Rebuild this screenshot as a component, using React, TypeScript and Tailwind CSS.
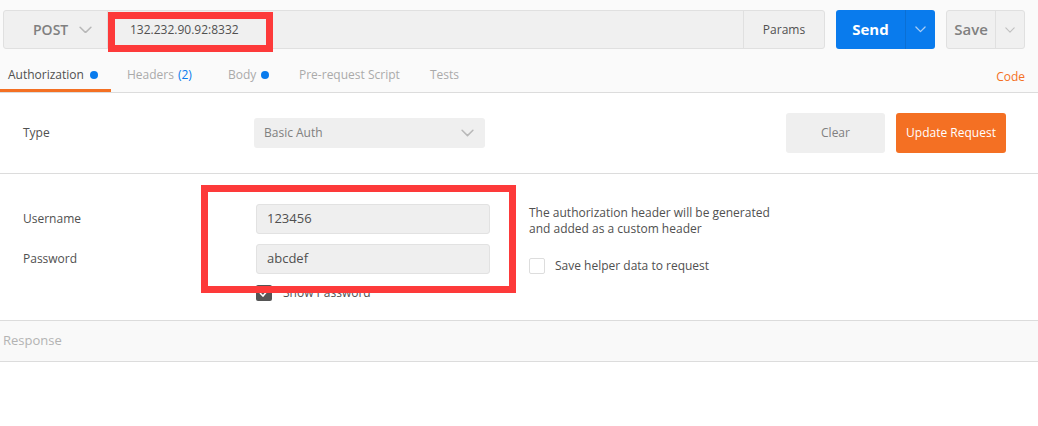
import React from "react";

const Chevron = ({ className, stroke = "#b0b0b0", w = 12 }: { className?: string; stroke?: string; w?: number }) => (
  <svg width={w} height={w * 0.6} viewBox="0 0 12 7" className={className} fill="none">
    <path d="M1 1l5 5 5-5" stroke={stroke} strokeWidth="1.4" strokeLinecap="round" strokeLinejoin="round" />
  </svg>
);

export default function App() {
  return (
    <div className="relative w-[1038px] h-[426px] bg-white overflow-hidden text-[12px] text-[#505050]" style={{ fontFamily: '"Open Sans", "Liberation Sans", sans-serif' }}>
      {/* Top area */}
      <div className="bg-[#fafafa] border-b border-[#dcdcdc]">
        <div className="flex items-start pt-[10px] pl-[3px]">
          <div className="flex h-[39px] w-[822px] bg-[#f0f0f0] border border-[#e0e0e0] rounded-[3px]">
            <div className="w-[104px] flex items-center pl-[29px] gap-[11px] border-r border-[#e0e0e0]">
              <span className="text-[14px] font-semibold text-[#808080]">POST</span>
              <Chevron stroke="#b8b8b8" w={13} />
            </div>
            <div className="flex-1 flex items-center pl-[22px] text-[12px] text-[#505050]">132.232.90.92:8332</div>
            <div className="w-[81px] flex items-center justify-center border-l border-[#e0e0e0] text-[12px] text-[#505050]">Params</div>
          </div>
          <div className="ml-[11px] flex h-[39px] w-[99px] rounded-[3px] bg-[#097bed]">
            <div className="w-[69px] flex items-center justify-center text-[15px] font-bold text-white">Send</div>
            <div className="flex-1 flex items-center justify-center border-l border-[#0a6fd4]">
              <Chevron stroke="#a9cdf5" w={11} />
            </div>
          </div>
          <div className="ml-[11px] flex h-[39px] w-[79px] rounded-[3px] bg-[#f0f0f0] border border-[#e0e0e0]">
            <div className="w-[48px] flex items-center justify-center text-[15px] font-semibold text-[#808080]">Save</div>
            <div className="flex-1 flex items-center justify-center border-l border-[#e0e0e0]">
              <Chevron stroke="#c0c0c0" w={10} />
            </div>
          </div>
        </div>
        <div className="flex items-stretch mt-[9px] h-[34px]">
          <div className="w-[111px] pl-[8px] flex items-center gap-[6px] border-b-[3px] border-[#f47023] pt-[3px]">
            <span className="text-[#505050]">Authorization</span>
            <span className="w-[8px] h-[8px] rounded-full bg-[#097bed]" />
          </div>
          <div className="w-[101px] pl-[16px] flex items-center text-[#aaaaaa]">
            Headers <span className="ml-[4px] text-[#097bed]">(2)</span>
          </div>
          <div className="w-[71px] pl-[16px] flex items-center gap-[5px] text-[#aaaaaa]">
            <span>Body</span>
            <span className="w-[8px] h-[8px] rounded-full bg-[#097bed]" />
          </div>
          <div className="w-[131px] pl-[16px] flex items-center text-[#aaaaaa]">Pre-request Script</div>
          <div className="pl-[16px] flex items-center text-[#aaaaaa]">Tests</div>
          <div className="ml-auto pr-[13px] flex items-center pt-[3px] text-[#f47023]">Code</div>
        </div>
      </div>

      {/* Type row */}
      <div className="flex items-center h-[81px] border-b border-[#dcdcdc]">
        <div className="w-[254px] pl-[23px]">Type</div>
        <div className="w-[231px] h-[30px] rounded-[3px] bg-[#efefef] flex items-center justify-between pl-[10px] pr-[11px] text-[#808080]">
          <span>Basic Auth</span>
          <Chevron stroke="#b8b8b8" w={13} />
        </div>
        <div className="flex-1" />
        <div className="w-[99px] h-[40px] rounded-[3px] bg-[#efefef] flex items-center justify-center text-[#808080]">Clear</div>
        <div className="ml-[11px] w-[110px] h-[40px] rounded-[3px] bg-[#f47023] flex items-center justify-center text-white">Update Request</div>
        <div className="w-[32px]" />
      </div>

      {/* Auth fields */}
      <div className="flex h-[147px] pt-[30px] border-b border-[#dcdcdc]">
        <div className="w-[256px] pl-[23px] flex flex-col">
          <div className="h-[30px] flex items-center">Username</div>
          <div className="h-[30px] mt-[10px] flex items-center">Password</div>
        </div>
        <div className="w-[234px] flex flex-col">
          <div className="h-[30px] rounded-[3px] bg-[#efefef] border border-[#e2e2e2] flex items-center pl-[10px] text-[13px]">123456</div>
          <div className="h-[30px] mt-[10px] rounded-[3px] bg-[#efefef] border border-[#e2e2e2] flex items-center pl-[10px] text-[13px]">abcdef</div>
          <div className="mt-[10px] flex items-center gap-[11px]">
            <div className="w-[16px] h-[16px] rounded-[2px] bg-[#555555] flex items-center justify-center">
              <svg width="10" height="8" viewBox="0 0 10 8" fill="none">
                <path d="M1 4l3 3 5-6" stroke="white" strokeWidth="1.6" />
              </svg>
            </div>
            <span>Show Password</span>
          </div>
        </div>
        <div className="ml-[39px] pt-[1px] flex flex-col">
          <div className="leading-[16px]">
            The authorization header will be generated
            <br />
            and added as a custom header
          </div>
          <div className="mt-[20px] flex items-center gap-[10px]">
            <div className="w-[16px] h-[16px] rounded-[2px] border border-[#dddddd] bg-white" />
            <span>Save helper data to request</span>
          </div>
        </div>
      </div>

      {/* Response */}
      <div className="h-[41px] bg-[#f9f9f9] border-b border-[#dcdcdc] flex items-center pl-[3px] text-[13px] text-[#b3b3b3]">Response</div>

      {/* Annotation overlays */}
      <div className="absolute left-[108px] top-[12px] w-[165px] h-[40px] border-[7px] border-[#fd3a3a]" />
      <div className="absolute left-[201px] top-[185px] w-[315px] h-[108px] border-[7px] border-[#fd3a3a]" />
    </div>
  );
}
